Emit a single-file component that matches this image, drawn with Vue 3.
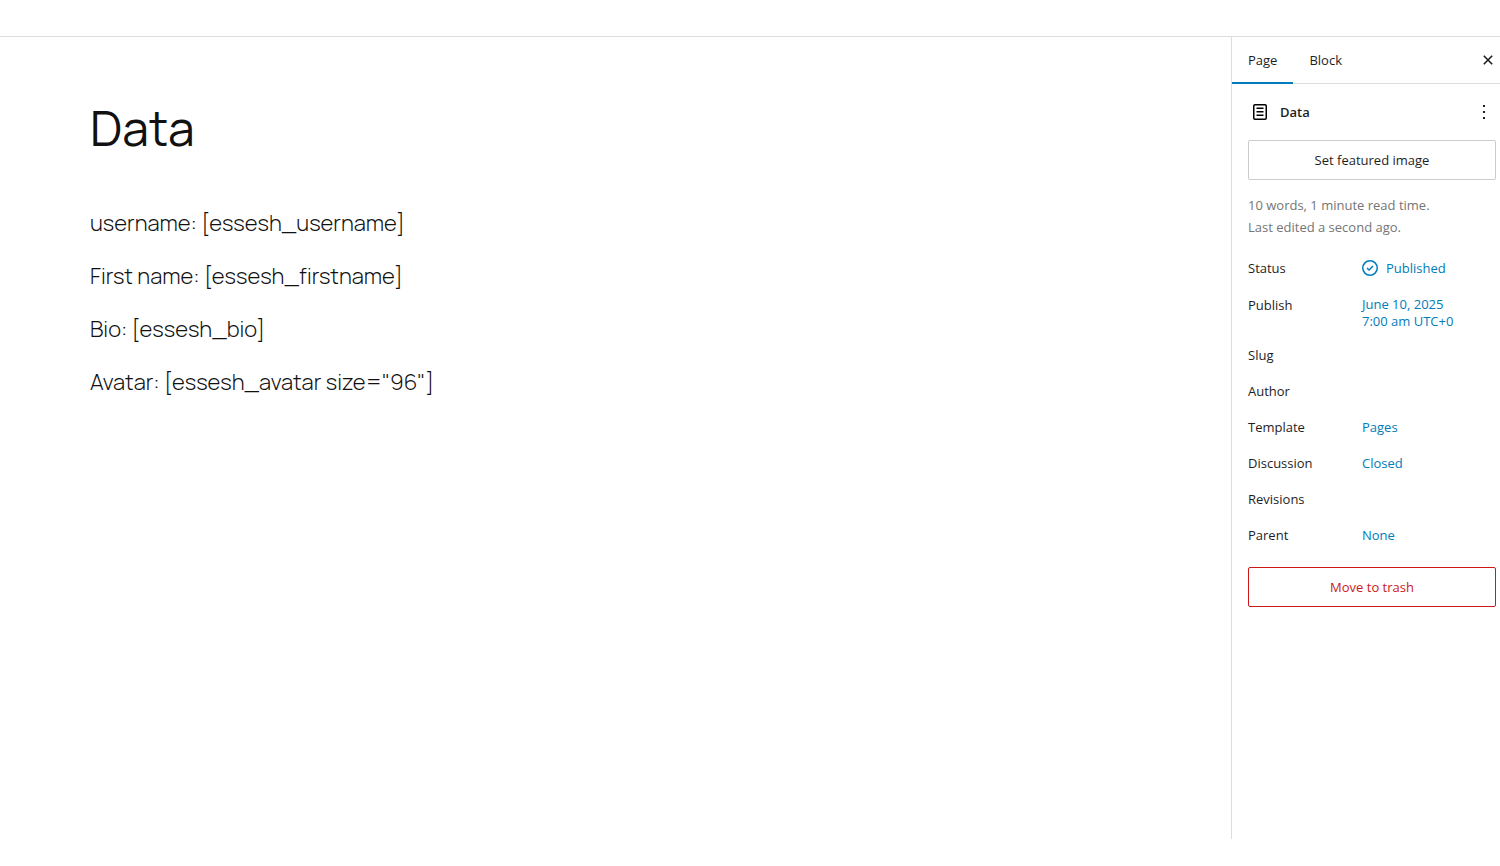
<script setup>
import { ref } from 'vue'

const title = ref('Data')
const activeTab = ref('Page')
const tabs = ['Page', 'Block']

const paragraphs = [
  'username: [essesh_username]',
  'First name: [essesh_firstname]',
  'Bio: [essesh_bio]',
  'Avatar: [essesh_avatar size="96"]'
]

const rows = [
  { label: 'Slug' },
  { label: 'Author' },
  { label: 'Template', value: 'Pages' },
  { label: 'Discussion', value: 'Closed' },
  { label: 'Revisions' },
  { label: 'Parent', value: 'None' }
]
</script>

<template>
  <div class="editor">
    <header class="topbar"></header>

    <div class="body">
      <main class="canvas">
        <h1>{{ title }}</h1>
        <p v-for="text in paragraphs" :key="text">{{ text }}</p>
      </main>

      <aside class="sidebar">
        <div class="tabs">
          <button
            v-for="tab in tabs"
            :key="tab"
            class="tab"
            :class="{ active: tab === activeTab }"
            @click="activeTab = tab"
          >
            {{ tab }}
          </button>
          <button class="close" aria-label="Close Settings">
            <svg width="24" height="24" viewBox="0 0 24 24">
              <path d="M7.8 7.8l8.4 8.4M16.2 7.8l-8.4 8.4" fill="none" stroke="currentColor" stroke-width="1.6" />
            </svg>
          </button>
        </div>

        <div class="panel">
          <div class="card">
            <svg class="page-icon" width="24" height="24" viewBox="0 0 24 24">
              <path d="M15.5 7.5h-7V9h7V7.5Zm-7 3.5h7v1.5h-7V11Zm7 3.5h-7V16h7v-1.5Z" />
              <path d="M17 4H7a2 2 0 0 0-2 2v12a2 2 0 0 0 2 2h10a2 2 0 0 0 2-2V6a2 2 0 0 0-2-2ZM7 5.5h10a.5.5 0 0 1 .5.5v12a.5.5 0 0 1-.5.5H7a.5.5 0 0 1-.5-.5V6a.5.5 0 0 1 .5-.5Z" />
            </svg>
            <h2>{{ title }}</h2>
            <button class="more" aria-label="Actions">
              <svg width="24" height="24" viewBox="0 0 24 24">
                <path d="M13 19h-2v-2h2v2zm0-6h-2v-2h2v2zm0-6h-2V5h2v2z" />
              </svg>
            </button>
          </div>

          <button class="wide">Set featured image</button>

          <div class="info">
            <div>10 words, 1 minute read time.</div>
            <div>Last edited a second ago.</div>
          </div>

          <div class="row">
            <span class="label">Status</span>
            <button class="value status">
              <svg width="24" height="24" viewBox="0 0 24 24">
                <path fill-rule="evenodd" d="M12 18.5a6.5 6.5 0 1 1 0-13 6.5 6.5 0 0 1 0 13ZM4 12a8 8 0 1 1 16 0 8 8 0 0 1-16 0Zm11.53-1.47-1.06-1.06L11 12.94l-1.47-1.47-1.06 1.06L11 15.06l4.53-4.53Z" />
              </svg>
              Published
            </button>
          </div>
          <div class="row publish">
            <span class="label">Publish</span>
            <button class="value">June 10, 2025<br />7:00 am UTC+0</button>
          </div>
          <div v-for="row in rows" :key="row.label" class="row">
            <span class="label">{{ row.label }}</span>
            <button v-if="row.value" class="value">{{ row.value }}</button>
          </div>

          <button class="wide trash">Move to trash</button>
        </div>
      </aside>
    </div>
  </div>
</template>

<style>
body {
  margin: 0;
  background: #fff;
}
</style>

<style scoped>
.editor {
  display: flex;
  flex-direction: column;
  height: 100vh;
  padding-bottom: 27px;
  box-sizing: border-box;
  font-family: "Segoe UI", "Open Sans", "Noto Sans", sans-serif;
  font-size: 13px;
  color: #1e1e1e;
}

.topbar {
  height: 36px;
  flex-shrink: 0;
  border-bottom: 1px solid #ddd;
}

.body {
  display: flex;
  flex: 1;
  min-height: 0;
}

.canvas {
  flex: 1;
  padding: 60px 90px;
  font-family: Manrope, Inter, sans-serif;
  font-weight: 300;
  color: #111;
}

h1 {
  margin: 0 0 49px;
  font-size: 48px;
  line-height: 62px;
  font-weight: 400;
}

.canvas p {
  margin: 0 0 22px;
  font-size: 22px;
  line-height: 31px;
}

.sidebar {
  width: 268px;
  flex-shrink: 0;
  border-left: 1px solid #ddd;
}

button {
  padding: 0;
  border: 0;
  background: none;
  font: inherit;
  color: inherit;
  cursor: pointer;
}

svg {
  display: block;
  flex-shrink: 0;
  fill: currentColor;
}

.tabs {
  display: flex;
  height: 46px;
  border-bottom: 1px solid #ddd;
}

.tab {
  height: 47px;
  padding: 0 16px;
  border-bottom: 2px solid transparent;
}

.tab.active {
  border-bottom-color: #007cba;
}

.close {
  margin-left: auto;
}

.panel {
  padding: 16px 4px 16px 16px;
}

.card {
  display: flex;
  align-items: center;
  height: 24px;
  margin-bottom: 16px;
}

.page-icon {
  color: #000;
}

h2 {
  flex: 1;
  margin: 0 0 0 8px;
  font-size: 13px;
  font-weight: 600;
}

.wide {
  display: block;
  width: 100%;
  height: 40px;
  border: 1px solid #ccc;
  border-radius: 2px;
}

.info {
  margin: 14px 0;
  line-height: 22px;
  color: #757575;
}

.row {
  display: flex;
  align-items: center;
  min-height: 32px;
  margin-bottom: 4px;
}

.label {
  width: 114px;
}

.value {
  color: #007cba;
  line-height: 17px;
  text-align: left;
}

.status {
  display: flex;
  align-items: center;
  gap: 4px;
  margin-left: -4px;
}

.publish {
  align-items: flex-start;
  min-height: 39px;
  padding-top: 8px;
}

.trash {
  margin-top: 16px;
  border-color: #cc1818;
  color: #cc1818;
}
</style>
